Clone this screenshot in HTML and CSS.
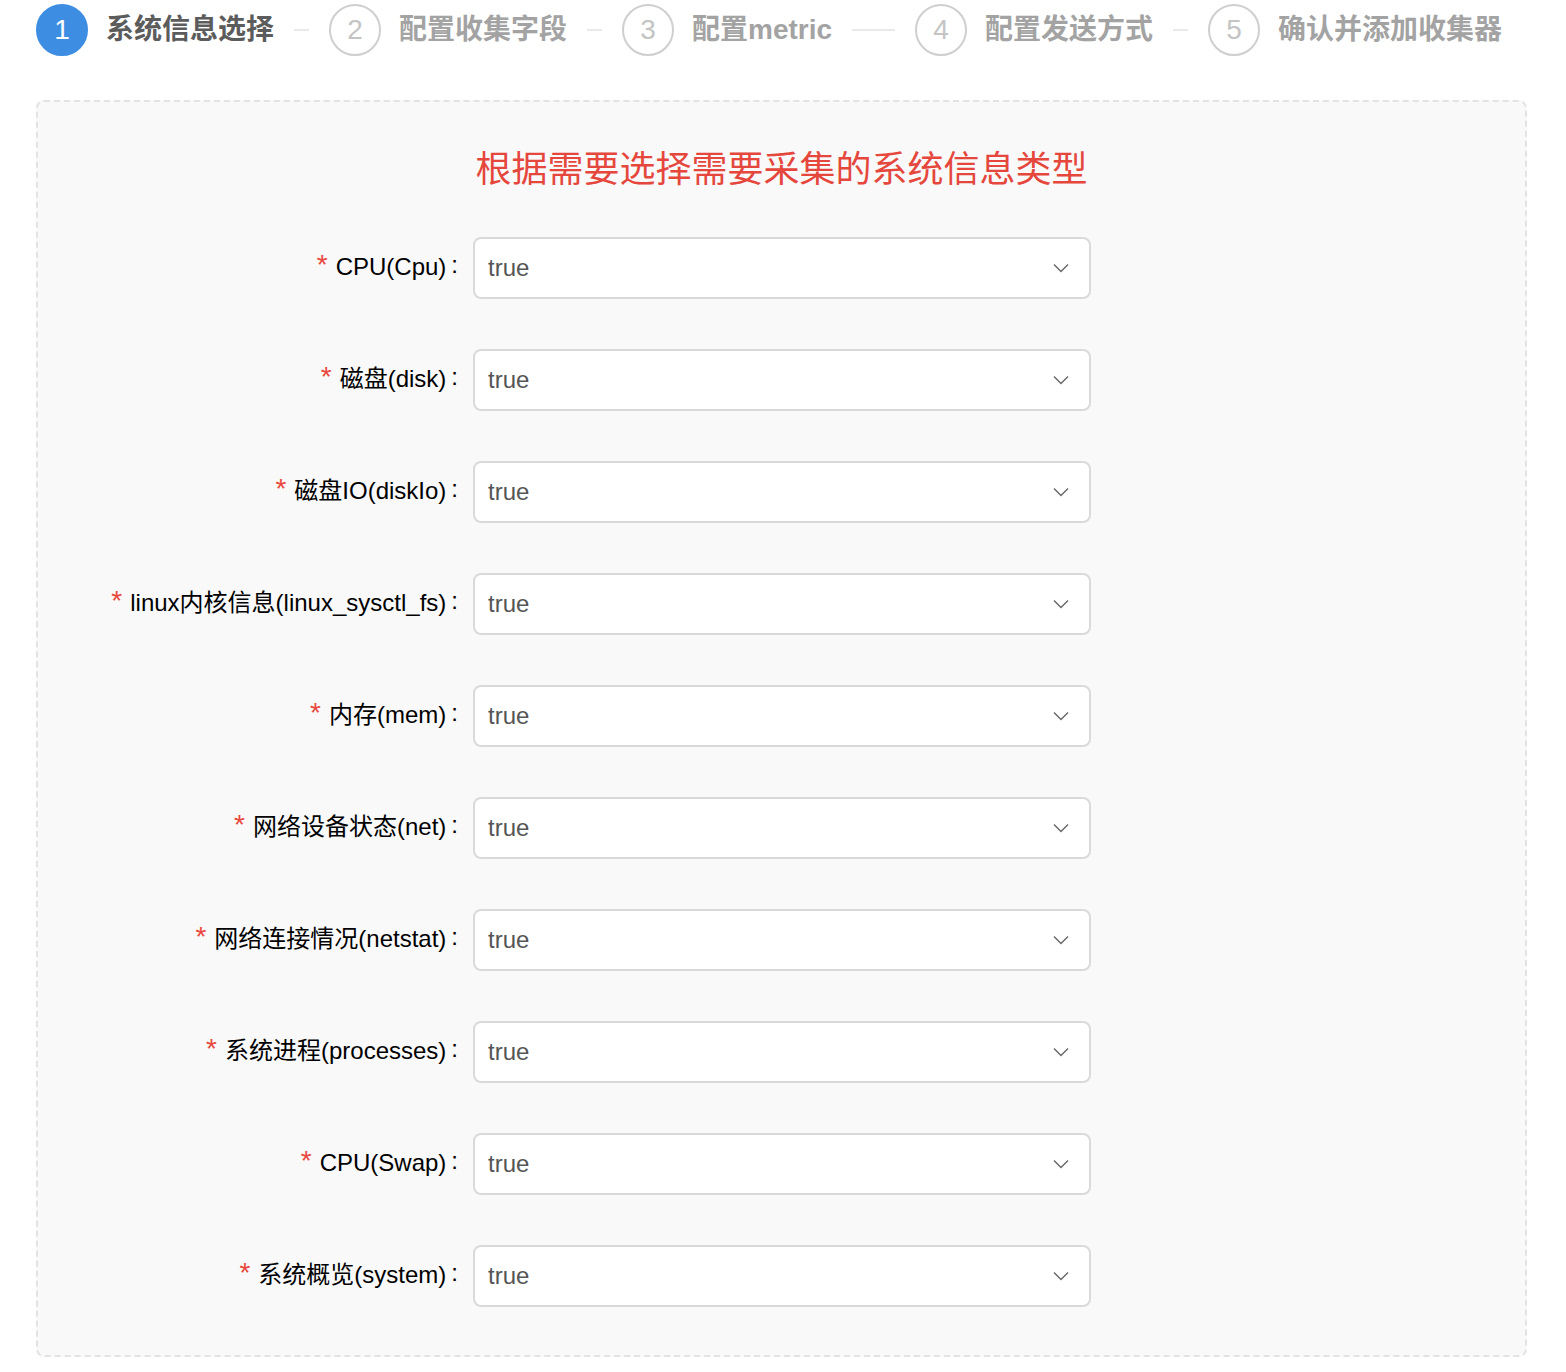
FILE: index.html
```html
<!DOCTYPE html>
<html lang="zh">
<head>
<meta charset="utf-8">
<title>系统信息选择</title>
<link rel="stylesheet" href="styles.css">
</head>
<body>
<div class="steps">
  <div class="step active"><span class="step-icon">1</span><span class="step-title">系统信息选择</span><span class="step-tail"></span></div>
  <div class="step"><span class="step-icon">2</span><span class="step-title">配置收集字段</span><span class="step-tail"></span></div>
  <div class="step"><span class="step-icon">3</span><span class="step-title">配置metric</span><span class="step-tail"></span></div>
  <div class="step"><span class="step-icon">4</span><span class="step-title">配置发送方式</span><span class="step-tail"></span></div>
  <div class="step last"><span class="step-icon">5</span><span class="step-title">确认并添加收集器</span></div>
</div>

<div class="card">
  <h2 class="card-title">根据需要选择需要采集的系统信息类型</h2>
  <form class="form">
    <div class="row"><label class="label"><span class="req">*</span>CPU(Cpu)<span class="colon">:</span></label><div class="select"><span class="value">true</span><svg class="arrow" viewBox="0 0 16 10" width="16" height="10"><path d="M1 1.5 L8 8.5 L15 1.5" fill="none" stroke="#666" stroke-width="1.4"/></svg></div></div>
    <div class="row"><label class="label"><span class="req">*</span>磁盘(disk)<span class="colon">:</span></label><div class="select"><span class="value">true</span><svg class="arrow" viewBox="0 0 16 10" width="16" height="10"><path d="M1 1.5 L8 8.5 L15 1.5" fill="none" stroke="#666" stroke-width="1.4"/></svg></div></div>
    <div class="row"><label class="label"><span class="req">*</span>磁盘IO(diskIo)<span class="colon">:</span></label><div class="select"><span class="value">true</span><svg class="arrow" viewBox="0 0 16 10" width="16" height="10"><path d="M1 1.5 L8 8.5 L15 1.5" fill="none" stroke="#666" stroke-width="1.4"/></svg></div></div>
    <div class="row"><label class="label"><span class="req">*</span>linux内核信息(linux_sysctl_fs)<span class="colon">:</span></label><div class="select"><span class="value">true</span><svg class="arrow" viewBox="0 0 16 10" width="16" height="10"><path d="M1 1.5 L8 8.5 L15 1.5" fill="none" stroke="#666" stroke-width="1.4"/></svg></div></div>
    <div class="row"><label class="label"><span class="req">*</span>内存(mem)<span class="colon">:</span></label><div class="select"><span class="value">true</span><svg class="arrow" viewBox="0 0 16 10" width="16" height="10"><path d="M1 1.5 L8 8.5 L15 1.5" fill="none" stroke="#666" stroke-width="1.4"/></svg></div></div>
    <div class="row"><label class="label"><span class="req">*</span>网络设备状态(net)<span class="colon">:</span></label><div class="select"><span class="value">true</span><svg class="arrow" viewBox="0 0 16 10" width="16" height="10"><path d="M1 1.5 L8 8.5 L15 1.5" fill="none" stroke="#666" stroke-width="1.4"/></svg></div></div>
    <div class="row"><label class="label"><span class="req">*</span>网络连接情况(netstat)<span class="colon">:</span></label><div class="select"><span class="value">true</span><svg class="arrow" viewBox="0 0 16 10" width="16" height="10"><path d="M1 1.5 L8 8.5 L15 1.5" fill="none" stroke="#666" stroke-width="1.4"/></svg></div></div>
    <div class="row"><label class="label"><span class="req">*</span>系统进程(processes)<span class="colon">:</span></label><div class="select"><span class="value">true</span><svg class="arrow" viewBox="0 0 16 10" width="16" height="10"><path d="M1 1.5 L8 8.5 L15 1.5" fill="none" stroke="#666" stroke-width="1.4"/></svg></div></div>
    <div class="row"><label class="label"><span class="req">*</span>CPU(Swap)<span class="colon">:</span></label><div class="select"><span class="value">true</span><svg class="arrow" viewBox="0 0 16 10" width="16" height="10"><path d="M1 1.5 L8 8.5 L15 1.5" fill="none" stroke="#666" stroke-width="1.4"/></svg></div></div>
    <div class="row"><label class="label"><span class="req">*</span>系统概览(system)<span class="colon">:</span></label><div class="select"><span class="value">true</span><svg class="arrow" viewBox="0 0 16 10" width="16" height="10"><path d="M1 1.5 L8 8.5 L15 1.5" fill="none" stroke="#666" stroke-width="1.4"/></svg></div></div>
  </form>
</div>
</body>
</html>
```

FILE: styles.css
```css
* { box-sizing: border-box; }

body {
  margin: 0;
  background: #fff;
  font-family: "Liberation Sans", "Noto Sans CJK SC", sans-serif;
  color: rgba(0, 0, 0, 0.85);
}

.steps {
  display: flex;
  align-items: center;
  margin-left: 36px;
  padding-top: 4px;
  width: 1466px;
}

.step {
  display: flex;
  align-items: center;
  flex: 1;
  min-width: 0;
}

.step.last { flex: none; }

.step-icon {
  flex: none;
  width: 52px;
  height: 52px;
  border-radius: 50%;
  border: 2px solid #cfcfcf;
  color: #c4c4c4;
  font-size: 28px;
  line-height: 48px;
  text-align: center;
  font-family: "Liberation Sans", sans-serif;
  font-weight: 300;
}

.step.active .step-icon {
  background: #3d8de3;
  border-color: #3d8de3;
  color: #fff;
}

.step-title {
  margin-left: 18px;
  font-size: 28px;
  font-weight: 700;
  color: #a3a3a3;
  white-space: nowrap;
  line-height: 52px;
}

.step.active .step-title { color: #5c5c5c; }

.step-tail {
  flex: 1;
  height: 2px;
  background: #e9e9e9;
  margin: 0 20px;
}

.card {
  margin: 44px 0 0 36px;
  width: 1491px;
  border: 2px dashed #e3e3e3;
  border-radius: 8px;
  background: #f9f9f9;
  padding-top: 44px;
}

.card-title {
  margin: 0 0 43px;
  text-align: center;
  font-size: 36px;
  line-height: 48px;
  font-weight: 400;
  color: #e5473d;
}

.form { display: flex; flex-direction: column; }

.row {
  display: flex;
  align-items: center;
  margin-bottom: 50px;
}

.row:last-child { margin-bottom: 48px; }

.label {
  width: 435px;
  flex: none;
  text-align: right;
  font-size: 24px;
  line-height: 30px;
  color: #000;
  white-space: nowrap;
  padding-bottom: 3px;
}

.req {
  color: #e9473c;
  margin-right: 8px;
  font-size: 28px;
  position: relative;
  top: -1px;
}

.colon {
  margin: 0 15px 0 5px;
  position: relative;
  top: -2px;
}

.select {
  width: 618px;
  height: 62px;
  border: 2px solid #dadada;
  border-radius: 8px;
  background: #fff;
  display: flex;
  align-items: center;
  justify-content: space-between;
  padding: 0 20px 0 13px;
}

.value {
  font-size: 24px;
  color: #555;
}

.arrow { display: block; }
```
